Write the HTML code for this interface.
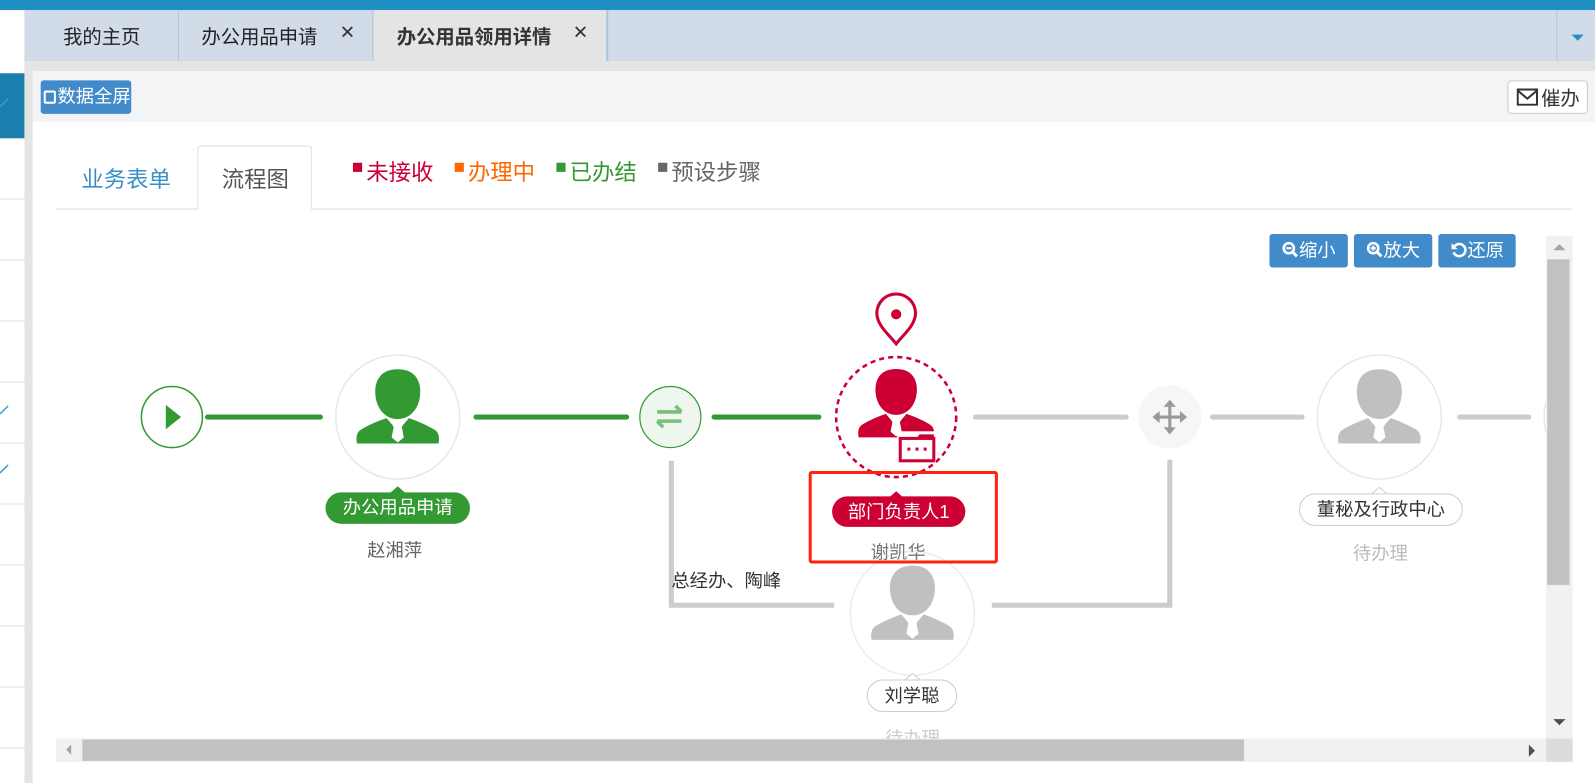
<!DOCTYPE html>
<html><head><meta charset="utf-8"><style>
*{margin:0;padding:0;box-sizing:border-box}
body{width:1595px;height:770px;position:relative;overflow:hidden;background:#e4e4e4;font-family:"Liberation Sans","Noto Sans CJK SC",sans-serif}
#w{position:absolute;left:0;top:0;width:1568px;height:757px;transform:scale(1.01722,1.0172);transform-origin:0 0}
.a{position:absolute}
.t{position:absolute;white-space:nowrap}
.btn{position:absolute;background:#428bca;color:#fff;border-radius:3px;font-size:18px;line-height:32px;text-align:center}
.pill{position:absolute;border-radius:16px;font-size:18px;line-height:30px;text-align:center;white-space:nowrap}
</style></head><body><div id="w">
<div class="a" style="left:0;top:0;width:1568px;height:10px;background:#1f8fc4"></div>
<div class="a" style="left:0;top:10px;width:24px;height:760px;background:#fff"></div>
<div class="a" style="left:0;top:72px;width:24px;height:64px;background:#1b7fae"></div>
<div class="a" style="left:0;top:136px;width:24px;height:634px;background:repeating-linear-gradient(to bottom,#fff 0,#fff 59px,#e2e2e2 59px,#e2e2e2 60px)"></div>
<svg class="a" style="left:0;top:398px" width="10" height="10"><path d="M0 9L8 1" stroke="#3a9ad9" stroke-width="1.5"/></svg>
<svg class="a" style="left:0;top:456px" width="10" height="10"><path d="M0 9L8 1" stroke="#3a9ad9" stroke-width="1.5"/></svg>
<svg class="a" style="left:0;top:96px" width="10" height="10"><path d="M0 9L8 1" stroke="#3a9ad9" stroke-width="1.5"/></svg>
<div class="a" style="left:24px;top:10px;width:1544px;height:50px;background:#d2dce8"></div>
<div class="t" style="left:62px;top:22px;font-size:19px;color:#222">我的主页</div>
<div class="a" style="left:175px;top:10px;width:1px;height:50px;background:#b8c4d2"></div>
<div class="t" style="left:198px;top:22px;font-size:19px;color:#222">办公用品申请</div>
<div class="t" style="left:334px;top:22px;font-size:18px;color:#333">✕</div>
<div class="a" style="left:366px;top:10px;width:232px;height:50px;background:#e4e4e4;border-left:1px solid #aac4dc;border-right:2px solid #aac4dc"></div>
<div class="t" style="left:390px;top:22px;font-size:19px;color:#333;font-weight:bold">办公用品领用详情</div>
<div class="t" style="left:563px;top:22px;font-size:18px;color:#333">✕</div>
<div class="a" style="left:1530px;top:10px;width:1px;height:50px;background:#b8c4d2"></div>
<div class="a" style="left:1545px;top:34px;width:0;height:0;border-left:6px solid transparent;border-right:6px solid transparent;border-top:6px solid #1f8fc4"></div>
<div class="a" style="left:32px;top:70px;width:1536px;height:700px;background:#fff"></div>
<div class="a" style="left:32px;top:70px;width:1536px;height:50px;background:#f3f4f6"></div>
<div class="btn" style="left:40px;top:79px;width:89px;height:33px;line-height:33px;font-size:18px;padding-left:2px">
<span style="display:inline-block;width:12px;height:13px;border:2px solid #fff;border-radius:2px;vertical-align:-1px;margin-right:2px"></span>数据全屏</div>
<div class="a" style="left:1482px;top:79px;width:79px;height:33px;background:#fff;border:1px solid #ccc;border-radius:4px"></div>
<svg class="a" style="left:1491px;top:87px" width="21" height="17" viewBox="0 0 21 17"><rect x="1" y="1" width="19" height="15" fill="none" stroke="#333" stroke-width="2"/><path d="M1 2 L10.5 10 L20 2" fill="none" stroke="#333" stroke-width="2"/></svg>
<div class="t" style="left:1515px;top:82px;font-size:19px;color:#333">催办</div>
<div class="a" style="left:55px;top:205px;width:1490px;height:1px;background:#ddd"></div>
<div class="t" style="left:80px;top:159px;font-size:22px;color:#3a8fc8">业务表单</div>
<div class="a" style="left:194px;top:143px;width:113px;height:63px;background:#fff;border:1px solid #ddd;border-bottom:none;border-radius:4px 4px 0 0"></div>
<div class="t" style="left:218px;top:159px;font-size:22px;color:#555">流程图</div>
<div class="a" style="left:347px;top:160px;width:9px;height:9px;background:#cc0033"></div>
<div class="t" style="left:360px;top:152px;font-size:22px;color:#cc0033">未接收</div>
<div class="a" style="left:447px;top:160px;width:9px;height:9px;background:#ff6600"></div>
<div class="t" style="left:460px;top:152px;font-size:22px;color:#ff6600">办理中</div>
<div class="a" style="left:547px;top:160px;width:9px;height:9px;background:#339933"></div>
<div class="t" style="left:560px;top:152px;font-size:22px;color:#339933">已办结</div>
<div class="a" style="left:647px;top:160px;width:9px;height:9px;background:#666"></div>
<div class="t" style="left:660px;top:152px;font-size:22px;color:#666">预设步骤</div>
<div class="btn" style="left:1248px;top:230px;width:77px;height:33px">
<svg width="17" height="17" viewBox="0 0 17 17" style="vertical-align:-2px"><circle cx="7" cy="7" r="5" fill="none" stroke="#fff" stroke-width="2.5"/><path d="M11 11l4 4" stroke="#fff" stroke-width="3"/><path d="M4.5 7h5" stroke="#fff" stroke-width="2"/></svg>缩小</div>
<div class="btn" style="left:1331px;top:230px;width:77px;height:33px">
<svg width="17" height="17" viewBox="0 0 17 17" style="vertical-align:-2px"><circle cx="7" cy="7" r="5" fill="none" stroke="#fff" stroke-width="2.5"/><path d="M11 11l4 4" stroke="#fff" stroke-width="3"/><path d="M4.5 7h5M7 4.5v5" stroke="#fff" stroke-width="2"/></svg>放大</div>
<div class="btn" style="left:1414px;top:230px;width:76px;height:33px">
<svg width="17" height="17" viewBox="0 0 17 17" style="vertical-align:-2px"><path d="M4 5 A6 6 0 1 1 3 11" fill="none" stroke="#fff" stroke-width="2.5"/><path d="M1 2v6h6z" fill="#fff"/></svg>还原</div>
<div class="a" style="left:1520px;top:232px;width:26px;height:494px;background:#f1f1f1"></div>
<div class="a" style="left:1521px;top:255px;width:22px;height:320px;background:#c1c1c1"></div>
<div class="a" style="left:1527px;top:240px;width:0;height:0;border-left:6px solid transparent;border-right:6px solid transparent;border-bottom:6px solid #a3a3a3"></div>
<div class="a" style="left:1527px;top:707px;width:0;height:0;border-left:6px solid transparent;border-right:6px solid transparent;border-top:6px solid #505050"></div>
<div class="a" style="left:55px;top:726px;width:1465px;height:23px;background:#f1f1f1"></div>
<div class="a" style="left:1520px;top:726px;width:26px;height:23px;background:#dcdcdc"></div>
<div class="a" style="left:81px;top:727px;width:1142px;height:21px;background:#c1c1c1"></div>
<div class="a" style="left:65px;top:732px;width:0;height:0;border-top:5px solid transparent;border-bottom:5px solid transparent;border-right:5px solid #a3a3a3"></div>
<div class="a" style="left:1503px;top:732px;width:0;height:0;border-top:6px solid transparent;border-bottom:6px solid transparent;border-left:6px solid #505050"></div>
<div class="a" style="left:55px;top:232px;width:1465px;height:494px;overflow:hidden">
<svg width="1465" height="494" viewBox="55 232 1465 494" style="position:absolute;left:0;top:0">
<defs>
<g id="p">
<path d="M0 -47 C-19 -47 -23 -33 -22 -22 C-21 -8 -12 2 0 2 C12 2 21 -8 22 -22 C23 -33 19 -47 0 -47Z"/>
<path d="M-11 1 C-20 4 -31 9 -37 13 C-41 16 -41 22 -40 26 L40 26 C41 22 41 16 37 13 C31 9 20 4 11 1 L5 8 L4 10 L6 20 L0 25 L-6 20 L-4 10 L-5 8Z"/>
</g>
</defs>
<g stroke-linecap="round" stroke-width="5" fill="none">
<path d="M204 410H315M468 410H616M702 410H805" stroke="#339933"/>
<path d="M959 410H1107M1192 410H1280M1435 410H1503" stroke="#cccccc"/>
<path d="M660 453V595H820M975 595H1150V452" stroke="#cccccc" stroke-linecap="butt"/>
</g>
<circle cx="169" cy="410" r="30" fill="#fff" stroke="#339933" stroke-width="1.5"/>
<path d="M163 398L178 410L163 422Z" fill="#339933"/>
<circle cx="391" cy="410" r="61" fill="#fff" stroke="#e8e8e8" stroke-width="1.5"/>
<use href="#p" transform="translate(391 410)" fill="#339933"/>
<circle cx="659" cy="410" r="30" fill="#eef6ee" stroke="#339933" stroke-width="1.2"/>
<path d="M646 405H670M664 399L670 405M646 414H670M652 420L646 414" stroke="#7bbf7b" stroke-width="3.5" fill="none"/>
<circle cx="881" cy="410" r="59" fill="#fff" stroke="#cc0033" stroke-width="2.5" stroke-dasharray="5 4"/>
<use href="#p" transform="translate(881 406) scale(0.92)" fill="#cc0033"/>
<rect x="882" y="424" width="38" height="31" fill="#fff"/>
<rect x="885" y="431" width="33" height="22" fill="none" stroke="#cc0033" stroke-width="3"/>
<path d="M885 432h15l4 -5h14v5" fill="#cc0033"/>
<rect x="892" y="440" width="3" height="3" fill="#cc0033"/><rect x="900" y="440" width="3" height="3" fill="#cc0033"/><rect x="908" y="440" width="3" height="3" fill="#cc0033"/>
<path d="M881 338 C875 330 862 320 862 308 A19 19 0 0 1 900 308 C900 320 887 330 881 338Z" fill="none" stroke="#cc0033" stroke-width="3"/>
<circle cx="881" cy="309" r="5" fill="#cc0033"/>
<circle cx="1150" cy="410" r="31" fill="#f6f6f6"/>
<path d="M1150 396V424M1136 410H1164" stroke="#999" stroke-width="3"/>
<path d="M1150 393l-6 7h12zM1150 427l-6 -7h12zM1133 410l7 -6v12zM1167 410l-7 -6v12z" fill="#999"/>
<circle cx="1356" cy="410" r="61" fill="#fff" stroke="#e8e8e8" stroke-width="1.5"/>
<use href="#p" transform="translate(1356 410)" fill="#c0c0c0"/>
<circle cx="1579" cy="410" r="61" fill="#fff" stroke="#e8e8e8" stroke-width="1.5"/>
<circle cx="897" cy="603" r="61" fill="#fff" stroke="#ececec" stroke-width="1.5"/>
<use href="#p" transform="translate(897 603)" fill="#c0c0c0"/>
<path d="M383 485l8 -7l8 7z" fill="#339933"/>
<path d="M873 490l8 -7l8 7z" fill="#cc0033"/>
<path d="M1348 486l8 -7l8 7" fill="#fff" stroke="#ccc"/>
<path d="M889 669l8 -7l8 7" fill="#fff" stroke="#ccc"/>
</svg>
<div class="pill" style="left:265px;top:252px;width:142px;height:31px;background:#339933;color:#fff">办公用品申请</div>
<div class="t" style="left:306px;top:295px;font-size:18px;color:#666">赵湘萍</div>
<div class="pill" style="left:763px;top:256px;width:131px;height:30px;background:#cc0033;color:#fff">部门负责人1</div>
<div class="t" style="left:801px;top:297px;font-size:18px;color:#777">谢凯华</div>
<div class="t" style="left:605px;top:325px;font-size:18px;color:#333">总经办、陶峰</div>
<div class="pill" style="left:1222px;top:253px;width:161px;height:32px;background:#fff;border:1px solid #ccc;color:#333">董秘及行政中心</div>
<div class="t" style="left:1275px;top:298px;font-size:18px;color:#bbb">待办理</div>
<div class="pill" style="left:797px;top:436px;width:89px;height:32px;background:#fff;border:1px solid #ccc;color:#333">刘学聪</div>
<div class="t" style="left:815px;top:480px;font-size:18px;color:#ccc">待办理</div>
</div>
<div class="a" style="left:795px;top:463px;width:186px;height:91px;border:3px solid #ff2211;border-radius:3px"></div>
</div></body></html>
